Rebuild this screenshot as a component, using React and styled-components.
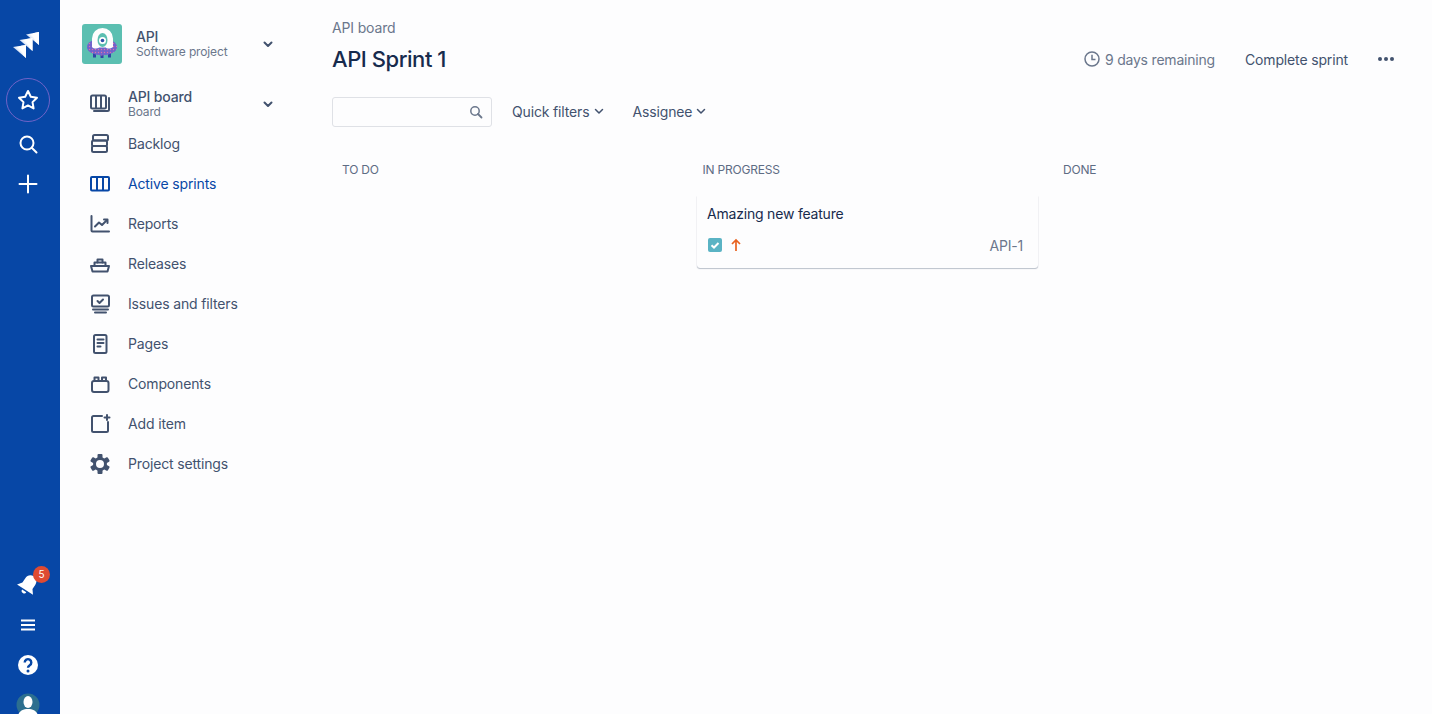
import React from "react";
import styled, { createGlobalStyle } from "styled-components";

const Global = createGlobalStyle`
  html, body { margin: 0; height: 100%; overflow: hidden; background: #fdfdfe; }
  body { font-family: Inter, "Liberation Sans", sans-serif; font-size: 14px; letter-spacing: -0.15px; color: #42526e; -webkit-font-smoothing: antialiased; }
  * { box-sizing: border-box; }
`;

const Page = styled.div`display: flex; height: 714px; overflow: hidden;`;
const Rail = styled.aside`
  width: 60px; flex: none; background: #0747a6; padding-right: 4px;
  display: flex; flex-direction: column; justify-content: space-between; overflow: hidden; color: #fff;
`;
const RailGroup = styled.div`
  display: flex; flex-direction: column; align-items: center;
  padding-top: ${p => p.$top || 0}px; margin-bottom: ${p => p.$bottom || 0}px;
`;
const RailItem = styled.div`
  position: relative; width: 44px; height: ${p => p.$h || 40}px; flex: none; margin-bottom: ${p => p.$mb || 0}px;
  display: flex; align-items: center; justify-content: center;
  ${p => p.$ring && `border: 1.5px solid #6f63c8; border-radius: 50%;`}
`;
const Badge = styled.span`
  position: absolute; top: 1px; left: 27px; width: 17px; height: 17px; border-radius: 50%;
  background: #de4a32; color: #fff; font-size: 10px; line-height: 17px; text-align: center;
`;
const LogoMark = styled.svg`width: 26px; height: 26px; margin-right: 4px;`;

const Sidebar = styled.nav`width: 272px; flex: none; padding: 24px 58px 0 22px;`;
const ProjectRow = styled.div`display: flex; align-items: center; height: 40px; margin-bottom: 20px;`;
const ProjectLogo = styled.svg`width: 40px; height: 40px; flex: none; margin-right: 14px;`;
const TwoLine = styled.div`flex: 1; display: flex; flex-direction: column; min-width: 0;`;
const StrongLine = styled.span`font-size: 14px; line-height: 16px; font-weight: 500; color: #42526e;`;
const SubLine = styled.span`font-size: 12px; line-height: 14px; color: #6b778c;`;
const Chevron = styled.svg`width: 12px; height: 12px; flex: none; margin-left: ${p => p.$ml || 0}px;`;
const NavRow = styled.div`
  display: flex; align-items: center; height: 40px; color: ${p => (p.$active ? "#0747a6" : "#42526e")};
`;
const NavIcon = styled.svg`width: 24px; height: 24px; flex: none; margin-left: 6px; margin-right: 16px;`;
const NavLabel = styled.span`line-height: 18px; padding-bottom: 1px;`;

const Main = styled.main`flex: 1; min-width: 0; padding: 18px 38px 0 0;`;
const Crumb = styled.div`font-size: 14px; line-height: 20px; color: #6b778c;`;
const Header = styled.header`display: flex; justify-content: space-between; align-items: center; margin-top: 7px; height: 28px;`;
const Title = styled.h1`margin: 0; font-size: 22px; line-height: 28px; font-weight: 500; color: #172b4d; letter-spacing: -0.45px;`;
const Actions = styled.div`display: flex; align-items: center;`;
const Remaining = styled.span`display: flex; align-items: center; gap: 5px; color: #6b778c; margin-right: 30px; letter-spacing: -0.2px;`;
const ActionText = styled.span`color: #42526e; margin-right: 30px;`;
const Toolbar = styled.div`display: flex; align-items: center; margin-top: 24px; height: 30px;`;
const Search = styled.div`
  width: 160px; height: 30px; border: 1px solid #dfe1e6; border-radius: 3px; margin-right: 20px;
  display: flex; align-items: center; justify-content: flex-end; padding-right: 8px;
`;
const Filter = styled.span`display: flex; align-items: center; color: #42526e; margin-right: 27px; padding-bottom: 2px;`;
const Board = styled.section`display: grid; grid-template-columns: repeat(3, 360.5px); margin-top: 33px;`;
const Column = styled.div`display: flex; flex-direction: column;`;
const ColumnLabel = styled.div`font-size: 12px; line-height: 20px; color: #5e6c84; padding-left: 10px; margin-bottom: 16px; letter-spacing: -0.2px;`;
const Card = styled.article`
  width: 341px; height: 72px; margin-left: 4.5px; background: #fdfdfe; border-radius: 0 0 3px 3px;
  box-shadow: 0 1px 1px rgba(9,30,66,.25), 0 0 1px rgba(9,30,66,.25);
  clip-path: inset(0 -4px -4px -4px);
  padding: 8px 15px 0 10px; display: flex; flex-direction: column;
`;
const CardTitle = styled.div`font-size: 14px; line-height: 20px; color: #172b4d; letter-spacing: -0.2px;`;
const CardFooter = styled.div`display: flex; align-items: center; margin-top: 11px; height: 20px;`;
const Check = styled.svg`width: 14px; height: 14px; margin-left: 1px; flex: none;`;
const Priority = styled.svg`width: 14px; height: 14px; margin-left: 7px; flex: none;`;
const CardKey = styled.span`margin-left: auto; color: #6b778c; font-size: 14px; letter-spacing: -0.2px;`;

const S = { fill: "none", stroke: "currentColor", strokeWidth: 2, strokeLinecap: "round", strokeLinejoin: "round" };

const icons = {
  board: <g {...S}><rect x="3" y="3.5" width="15" height="13" rx="1.5"/><path d="M8 4v12M13 4v12M21 6v11.5a1.5 1.5 0 0 1-1.5 1.5H6" /></g>,
  backlog: <g {...S}><rect x="5" y="3" width="15" height="5.5" rx="1.5"/><rect x="4" y="8.5" width="15" height="5.5" rx="1.5"/><rect x="4" y="14" width="15" height="6" rx="1.5"/></g>,
  active: <g {...S} strokeLinecap="butt" strokeLinejoin="miter"><rect x="3" y="5" width="18" height="13.5" rx="1"/><path d="M9 5v13.5M15 5v13.5"/></g>,
  reports: <g {...S}><path d="M3.5 4v14.5a1 1 0 0 0 1 1H21"/><path d="M7 14.5l4-4 3 2.5 5-5"/><path d="M16 7.5h3.5V11"/></g>,
  releases: <g {...S}><path d="M3 14h18l-1.500 5.500h-15z"/><path d="M6.500 14v-3.500h11V14"/><path d="M9.500 10.500V7.500h5v3"/></g>,
  issues: <g {...S}><rect x="4" y="3.500" width="17" height="11" rx="1.500"/><path d="M9.500 9l2 2 3.500-3.500"/><path d="M5 17.500h15M7 20.500h11"/></g>,
  pages: <g {...S}><rect x="6" y="3" width="12.500" height="18" rx="1.500"/><path d="M9.500 7.500h6M9.500 11h6M9.500 14.500h3"/></g>,
  components: <g {...S}><rect x="4" y="9" width="16.500" height="11" rx="2"/><path d="M6.500 9V5.500h4V9M14 9V5.500h4V9"/></g>,
  add: <g {...S}><path d="M14 4H5.500A1.500 1.500 0 0 0 4 5.500v13A1.500 1.500 0 0 0 5.500 20h13a1.500 1.500 0 0 0 1.500-1.500V10"/><path d="M19 3v5M16.500 5.500h5"/></g>,
  settings: <g><circle cx="12" cy="12" r="5.500" fill="none" stroke="currentColor" strokeWidth="3"/><g fill="currentColor">{[0,60,120,180,240,300].map(a => <rect key={a} x="9.500" y="2" width="5" height="4.500" rx="1" transform={`rotate(${a} 12 12)`}/>)}</g></g>,
};

const nav = [
  ["backlog", "Backlog"],
  ["active", "Active sprints", true],
  ["reports", "Reports"],
  ["releases", "Releases"],
  ["issues", "Issues and filters"],
  ["pages", "Pages"],
  ["components", "Components"],
  ["add", "Add item"],
  ["settings", "Project settings"],
];

const Down = ({ ml, color = "#42526e", w = 2 }) => (
  <Chevron $ml={ml} viewBox="0 0 12 12"><path d="M2.500 4.500L6 8l3.500-3.500" fill="none" stroke={color} strokeWidth={w} strokeLinecap="round" strokeLinejoin="round"/></Chevron>
);

const JiraLogo = () => (
  <LogoMark viewBox="0 0 26 26">
    <defs>
      <linearGradient id="jg" x1="0" y1="1" x2="1" y2="0">
        <stop offset="0.1" stopColor="#6f9bdf"/><stop offset="0.6" stopColor="#fff"/>
      </linearGradient>
    </defs>
    <path d="M13 2.500 26 0v13z" fill="url(#jg)"/>
    <path d="M6.500 8 19.500 6v13z" fill="url(#jg)"/>
    <path d="M0 15 13 13v13z" fill="url(#jg)"/>
    <path d="M20 1.200 26 0v13l-4-4z" fill="#fff"/>
    <path d="M14 7 19.500 6v13l-3-3z" fill="#fff"/>
    <path d="M8 13.800 13 13v13l-3-3z" fill="#fff"/>
  </LogoMark>
);

const ProjectAvatar = () => (
  <ProjectLogo viewBox="0 0 40 40">
    <defs>
      <pattern id="dots" width="3" height="3" patternUnits="userSpaceOnUse">
        <rect width="3" height="3" fill="#6f64cc"/>
        <circle cx="1.500" cy="1.500" r="0.700" fill="#e070a8"/>
      </pattern>
    </defs>
    <rect width="40" height="40" rx="3" fill="#5bbfb1"/>
    <path d="M11 29v4.500h3V29zM18.500 30v4h3v-4zM26 29v4.500h3V29z" fill="#2f45a5"/>
    <ellipse cx="20" cy="23" rx="15" ry="8.500" fill="url(#dots)"/>
    <path d="M10 23V14.500a10.500 10.500 0 0 1 21 0V23c-1.500 1-3 1.500-5 1.500-2 0-2-1-2-1h-7s-1 1-3 1c-2 0-3-.5-4-1.500z" fill="#fdfdfd"/>
    <ellipse cx="20.500" cy="16" rx="5" ry="7" fill="#5bbfb1"/>
    <circle cx="20.500" cy="16.500" r="3.500" fill="#fff"/>
    <circle cx="20.500" cy="16.500" r="1.800" fill="#2f4ea8"/>
  </ProjectLogo>
);

export default function App() {
  return (
    <Page>
      <Global />
      <Rail>
        <RailGroup $top={18}>
          <RailItem $h={54} $mb={6}><JiraLogo /></RailItem>
          <RailItem $ring $h={44} $mb={2}>
            <svg width="24" height="24" viewBox="0 0 24 24"><path d="M12 3l2.800 5.800 6.200.9-4.500 4.400 1.100 6.300L12 17.400l-5.600 3 1.100-6.300L3 9.700l6.200-.9z" fill="none" stroke="#fff" strokeWidth="2" strokeLinejoin="round"/></svg>
          </RailItem>
          <RailItem>
            <svg width="24" height="24" viewBox="0 0 24 24"><circle cx="11" cy="11" r="6.500" fill="none" stroke="#fff" strokeWidth="2"/><path d="M16 16l4.500 4.500" stroke="#fff" strokeWidth="2" strokeLinecap="round"/></svg>
          </RailItem>
          <RailItem>
            <svg width="24" height="24" viewBox="0 0 24 24"><path d="M12 3.500v17M3.500 12h17" stroke="#fff" strokeWidth="2" strokeLinecap="round"/></svg>
          </RailItem>
        </RailGroup>
        <RailGroup $bottom={-11}>
          <RailItem>
            <svg width="24" height="24" viewBox="0 0 24 24"><g transform="rotate(33 12 12)" fill="#fff"><path d="M12 1.500c-3.800 0-6 2.800-6 6.500v5l-3.500 4.500h19L18 13V8c0-3.700-2.200-6.500-6-6.500z"/><path d="M9.500 19h5a2.500 2.500 0 0 1-5 0z"/></g></svg>
            <Badge>5</Badge>
          </RailItem>
          <RailItem>
            <svg width="24" height="24" viewBox="0 0 24 24"><path d="M5 7.500h14M5 12h14M5 16.500h14" stroke="#fff" strokeWidth="2"/></svg>
          </RailItem>
          <RailItem>
            <svg width="24" height="24" viewBox="0 0 24 24"><circle cx="12" cy="12" r="10" fill="#fff"/><path d="M8.700 9.500a3.300 3.300 0 1 1 5 2.800c-1 .7-1.700 1.100-1.700 2.500" fill="none" stroke="#0747a6" strokeWidth="2.400"/><circle cx="12" cy="18" r="1.500" fill="#0747a6"/></svg>
          </RailItem>
          <RailItem>
            <svg width="24" height="40" viewBox="0 0 24 40"><circle cx="12" cy="20" r="11.500" fill="#2c6f8f"/><ellipse cx="12" cy="17" rx="4.500" ry="6" fill="#fff"/><path d="M2 32c0-5 4-8 10-8s10 3 10 8z" fill="#fff"/></svg>
          </RailItem>
        </RailGroup>
      </Rail>

      <Sidebar>
        <ProjectRow>
          <ProjectAvatar />
          <TwoLine>
            <StrongLine>API</StrongLine>
            <SubLine>Software project</SubLine>
          </TwoLine>
          <Down />
        </ProjectRow>
        <NavRow>
          <NavIcon viewBox="0 0 24 24">{icons.board}</NavIcon>
          <TwoLine>
            <StrongLine>API board</StrongLine>
            <SubLine>Board</SubLine>
          </TwoLine>
          <Down />
        </NavRow>
        {nav.map(([k, label, active]) => (
          <NavRow key={k} $active={active}>
            <NavIcon viewBox="0 0 24 24">{icons[k]}</NavIcon>
            <NavLabel>{label}</NavLabel>
          </NavRow>
        ))}
      </Sidebar>

      <Main>
        <Crumb>API board</Crumb>
        <Header>
          <Title>API Sprint 1</Title>
          <Actions>
            <Remaining>
              <svg width="16" height="16" viewBox="0 0 16 16"><circle cx="8" cy="8" r="7" fill="none" stroke="#6b778c" strokeWidth="1.500"/><path d="M8 3.800V8.500h3.500" fill="none" stroke="#6b778c" strokeWidth="1.500"/></svg>
              9 days remaining
            </Remaining>
            <ActionText>Complete sprint</ActionText>
            <svg width="16" height="16" viewBox="0 0 16 16" fill="#42526e"><circle cx="2" cy="8" r="2"/><circle cx="8" cy="8" r="2"/><circle cx="14" cy="8" r="2"/></svg>
          </Actions>
        </Header>
        <Toolbar>
          <Search>
            <svg width="14" height="14" viewBox="0 0 14 14"><circle cx="6" cy="6" r="4.200" fill="none" stroke="#6b778c" strokeWidth="1.500"/><path d="M9 9l3.500 3.500" stroke="#6b778c" strokeWidth="1.800" strokeLinecap="round"/></svg>
          </Search>
          <Filter>Quick filters<Down ml={4} w={1.5} /></Filter>
          <Filter>Assignee<Down ml={3} w={1.5} /></Filter>
        </Toolbar>
        <Board>
          <Column><ColumnLabel>TO DO</ColumnLabel></Column>
          <Column>
            <ColumnLabel>IN PROGRESS</ColumnLabel>
            <Card>
              <CardTitle>Amazing new feature</CardTitle>
              <CardFooter>
                <Check viewBox="0 0 14 14"><rect width="14" height="14" rx="2" fill="#5ab3c4"/><path d="M3.500 7.200l2.500 2.300 4.500-4.500" fill="none" stroke="#fff" strokeWidth="2"/></Check>
                <Priority viewBox="0 0 14 14"><path d="M7 13V2M3 6l4-4 4 4" fill="none" stroke="#e8621f" strokeWidth="1.700"/></Priority>
                <CardKey>API-1</CardKey>
              </CardFooter>
            </Card>
          </Column>
          <Column><ColumnLabel>DONE</ColumnLabel></Column>
        </Board>
      </Main>
    </Page>
  );
}
